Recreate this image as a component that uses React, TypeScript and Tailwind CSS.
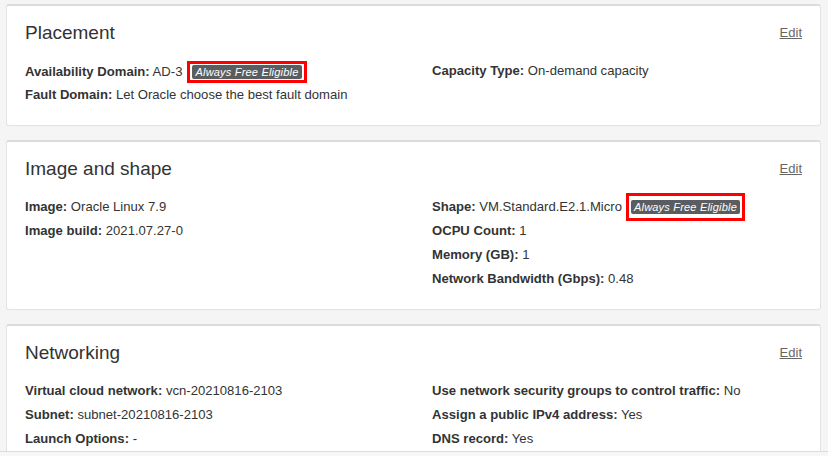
import React from 'react';

type Row = { label: string; value: string; badge?: 'tight' | 'loose' };

function FreeBadge({ loose }: { loose?: boolean }) {
  return (
    <span
      className={`inline-flex shrink-0 items-center border-[3px] border-[#ff0000] bg-white px-[2px] ${
        loose ? 'ml-[4px] py-[4px]' : 'ml-[5px] py-[1px]'
      }`}
    >
      <span className="h-[14px] rounded-[2px] bg-[#5a5d60] px-[3px] text-[11px] italic leading-[14px] tracking-[0.2px] text-white">
        Always Free Eligible
      </span>
    </span>
  );
}

function Field({ row }: { row: Row }) {
  const h = row.badge === 'tight' ? 'h-6 pt-[2px]' : 'h-6';
  return (
    <div className={`flex items-center text-[13.1px] ${h}`}>
      <span className="whitespace-nowrap">
        <span className="font-bold">{row.label}:</span> {row.value}
      </span>
      {row.badge && <FreeBadge loose={row.badge === 'loose'} />}
    </div>
  );
}

function Section({ title, left, right }: { title: string; left: Row[]; right: Row[] }) {
  return (
    <section className="shrink-0 rounded-[3px] border border-t-2 border-[#e3e3e3] border-t-[#dcdce0] bg-white px-[18px] pb-[18px] pt-[15px]">
      {/* Header */}
      <div className="flex h-6 items-center justify-between">
        <h2 className="text-[19px] leading-6 text-[#333]">{title}</h2>
        <a className="cursor-pointer text-[13px] text-[#666] underline">Edit</a>
      </div>

      {/* Details */}
      <div className="mt-[14px] grid grid-cols-[407px_1fr]">
        <div className="flex flex-col">
          {left.map((r) => (
            <Field key={r.label} row={r} />
          ))}
        </div>
        <div className="flex flex-col">
          {right.map((r) => (
            <Field key={r.label} row={r} />
          ))}
        </div>
      </div>
    </section>
  );
}

export default function App() {
  return (
    <div className="h-[456px] w-[828px] bg-[#f7f7f7] font-['Liberation_Sans',Arial,sans-serif] text-[#333]">
      <div className="flex h-[452px] flex-col gap-[14px] overflow-hidden border-b border-[#dcdcdc] bg-[#f5f5f5] pl-[6px] pr-[7px] pt-[4px]">
        <Section
          title="Placement"
          left={[
            { label: 'Availability Domain', value: 'AD-3', badge: 'tight' },
            { label: 'Fault Domain', value: 'Let Oracle choose the best fault domain' },
          ]}
          right={[{ label: 'Capacity Type', value: 'On-demand capacity' }]}
        />
        <Section
          title="Image and shape"
          left={[
            { label: 'Image', value: 'Oracle Linux 7.9' },
            { label: 'Image build', value: '2021.07.27-0' },
          ]}
          right={[
            { label: 'Shape', value: 'VM.Standard.E2.1.Micro', badge: 'loose' },
            { label: 'OCPU Count', value: '1' },
            { label: 'Memory (GB)', value: '1' },
            { label: 'Network Bandwidth (Gbps)', value: '0.48' },
          ]}
        />
        <Section
          title="Networking"
          left={[
            { label: 'Virtual cloud network', value: 'vcn-20210816-2103' },
            { label: 'Subnet', value: 'subnet-20210816-2103' },
            { label: 'Launch Options', value: '-' },
          ]}
          right={[
            { label: 'Use network security groups to control traffic', value: 'No' },
            { label: 'Assign a public IPv4 address', value: 'Yes' },
            { label: 'DNS record', value: 'Yes' },
          ]}
        />
      </div>
    </div>
  );
}
